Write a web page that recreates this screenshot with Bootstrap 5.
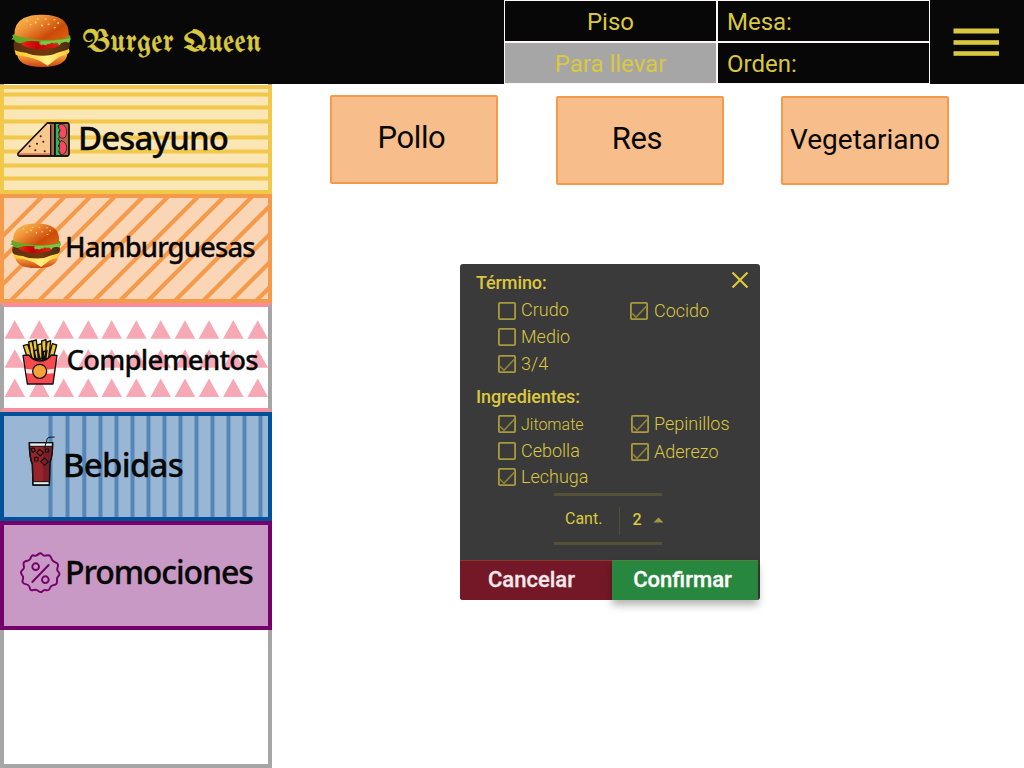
<!DOCTYPE html>
<html lang="es">
<head>
<meta charset="utf-8">
<meta name="viewport" content="width=device-width, initial-scale=1">
<title>Burger Queen</title>
<link href="https://cdn.jsdelivr.net/npm/bootstrap@5.3.0/dist/css/bootstrap.min.css" rel="stylesheet">
<style>
body{font-family:Roboto,sans-serif;width:1024px;height:768px;background:#fff;color:#080808;line-height:1}
svg{flex:none;display:block}
.topbar{height:84px;background:#080808;color:#dac83f}
.logo{margin:14px 0 0 11px}
.brand{font:400 30px/1 "Old English Text MT","UnifrakturMaguntia","UnifrakturCook","Liberation Serif",serif;margin:28px 0 0 12px;letter-spacing:.45px;-webkit-text-stroke:.5px #dac83f}
.order{width:426px;height:84px;margin-left:auto;display:grid;grid-template-columns:211px 211px;grid-template-rows:40px 40px;gap:2px;padding:1px;background:#fbf7f8;font-size:24px}
.order>div{background:#060706;padding-top:9px}
.order>.away{background:#a6a6a6}
.order>.info{padding-left:9px}
.burgerbtn{width:94px;padding:28px 0 0 23px}
.side{width:272px;height:684px;border:solid #a6a6a6;border-width:0 4px 4px;padding-top:1px}
.item{height:109px;width:272px;margin-left:-4px;border:4px solid;font-family:"Noto Sans",sans-serif;font-weight:500}
.item .pat{position:absolute;left:0;top:0}
.item .ico,.item span{position:relative}
.item span{-webkit-text-stroke:.3px}
.des{border-color:#f2c84b;background:#fae7b5}
.ham{border-color:#f59a4a;background:#fad5b6}
.com{border-color:#f68e9e #a6a6a6;background:#fff}
.beb{border-color:#00509a;background:#9ab6d5}
.pro{border-color:#75006b;background:#c799c4}
.des span{font-size:33px;margin:32px 0 0 8px;letter-spacing:-.85px}
.ham span{font-size:27.5px;margin:35px 0 0 4px;letter-spacing:-.9px}
.com span{font-size:27.5px;margin:39px 0 0 9px;letter-spacing:-.75px}
.beb span{font-size:33px;margin:32px 0 0 6px;letter-spacing:-.75px}
.pro span{font-size:32px;margin:31px 0 0 4px;letter-spacing:-1.1px}
.kinds{padding:11px 0 0 58px;gap:57.5px}
.kind{width:168px;height:89px;background:#f7bd8a;border:2px solid #f59a4a;border-radius:2px;font-size:31px;padding-top:25px}
.k1,.k2{letter-spacing:-.4px}
.dialog-box{width:300px;height:336px;margin:79px 0 0 188px;background:#3a3a3a;color:#dac83f;border-radius:3px;font-size:18px;font-weight:300}
.dialog-box h2{font-size:18px;font-weight:500;line-height:20px;margin:0 0 0 16px;letter-spacing:-.1px}
.opts{padding-left:38px;width:170px}
.opts.right{padding-left:0;width:120px}
.opt{height:26.5px;gap:5px}
.opt svg{width:18px;height:18px}
.qty{width:108px;height:52px;margin:0 0 0 94px;border:solid #555138;border-width:3px 0;font-size:16px;font-weight:400}
.qty .rule{flex:none;width:1px;height:28px;background:#504f3f;margin:11px 12px 0 17px}
.act{font-size:22px;font-weight:500;border:0;border-radius:0;line-height:1;padding:0 0 1px;height:40px;-webkit-text-stroke:.3px}
.cancel{width:152px;background:#741828;color:#f5e8ea;border-top:1px solid #8a3a2b;border-bottom-left-radius:3px;padding-right:9px}
.confirm{width:146px;background:#28873e;color:#fff;box-shadow:0 5px 8px rgba(0,0,0,.3);border-top:1px solid #4d8537;padding-right:5px}
</style>
</head>
<body class="d-flex flex-column overflow-hidden">
<svg width="0" height="0" class="position-absolute">
<defs>
<linearGradient id="bun" x1="0" y1=".1" x2="1" y2=".8"><stop offset="0" stop-color="#ffc150"/><stop offset=".35" stop-color="#ee9238"/><stop offset=".75" stop-color="#cc4a08"/><stop offset="1" stop-color="#d85d12"/></linearGradient>
<linearGradient id="bot" x1="0" y1="0" x2="0" y2="1"><stop offset="0" stop-color="#ffb349"/><stop offset="1" stop-color="#cc4310"/></linearGradient>
<linearGradient id="tom"><stop offset="0" stop-color="#ee2515"/><stop offset=".4" stop-color="#c50008"/><stop offset="1" stop-color="#e32316"/></linearGradient>
<linearGradient id="meat"><stop offset="0" stop-color="#5b3112"/><stop offset=".6" stop-color="#743a0d"/><stop offset="1" stop-color="#492b17"/></linearGradient>
<linearGradient id="chz"><stop offset="0" stop-color="#ffc51d"/><stop offset=".6" stop-color="#fff283"/><stop offset="1" stop-color="#ffc62a"/></linearGradient>
<symbol id="burger" viewBox="0 0 180 160">
<path d="M18 118Q17 160 94 160Q169 160 170 118Z" fill="url(#bot)"/>
<path d="M10 108L174 104Q178 112 174 118L164 124Q150 126 140 133L110 156L86 141Q66 132 44 128L14 124Z" fill="url(#chz)"/>
<path d="M9 84Q3 105 14 111Q28 116 45 117Q62 126 95 126Q123 126 139 117L170 108Q181 104 175 82Z" fill="url(#meat)"/>
<path d="M31 89Q35 81 60 81L140 82L148 92Q139 102 121 103Q98 110 72 106Q43 101 31 92Z" fill="url(#tom)"/>
<path d="M3 64L15 58L166 58L178 66L180 76L175 87L164 84L151 87L146 95L139 87L129 90L122 86L117 92L112 90L104 95L96 91L91 95L84 89L86 83Q52 79 38 85L26 89L12 84L9 78L0 77L6 71Z" fill="#65a822"/>
<path d="M90 82Q140 81 177 73L175 86L164 84L151 87L146 94L138 86L122 86L112 90L103 93L88 91Z" fill="#7fc547"/>
<path d="M10 64Q8 28 38 12Q61 1 94 2Q133 2 155 17Q175 31 174 65Q172 75 140 77Q75 84 10 64Z" fill="url(#bun)"/>
<g fill="#ffd775"><ellipse cx="80" cy="15" rx="3.500" ry="2"/><ellipse cx="104" cy="15" rx="3.500" ry="2"/><ellipse cx="131" cy="17" rx="3.500" ry="2"/><ellipse cx="48" cy="21" rx="3" ry="2"/><ellipse cx="74" cy="26" rx="3" ry="3"/><ellipse cx="59" cy="32" rx="3" ry="2"/><ellipse cx="93" cy="35" rx="3" ry="3"/><ellipse cx="113" cy="31" rx="3.500" ry="2"/><ellipse cx="142" cy="27" rx="3" ry="3"/><ellipse cx="132" cy="41" rx="4" ry="2"/></g>
</symbol>
<symbol id="box" viewBox="0 0 18 18"><rect x=".9" y=".9" width="16.200" height="16.200" rx="1" fill="none" stroke="#a99b3c" stroke-width="1.800"/></symbol>
<symbol id="boxon" viewBox="0 0 18 18"><rect x=".9" y=".9" width="16.200" height="16.200" rx="1" fill="none" stroke="#a99b3c" stroke-width="1.800"/><path d="M2 11.200L6 15.300L16.600 4" fill="none" stroke="#8c823b" stroke-width="1.600"/></symbol>
</defs>
</svg>

<header class="topbar d-flex align-items-start">
<svg class="logo" width="60" height="53"><use href="#burger"/></svg>
<div class="brand text-nowrap">Burger Queen</div>
<div class="order">
<div class="text-center">Piso</div><div class="info">Mesa:</div>
<div class="away text-center">Para llevar</div><div class="info">Orden:</div>
</div>
<div class="burgerbtn"><svg width="46" height="29" fill="#dac83f"><rect x=".5" y=".5" width="45.500" height="5"/><rect x=".5" y="12.200" width="45.500" height="4.600"/><rect x=".5" y="23.200" width="45.500" height="4.600"/></svg></div>
</header>

<div class="d-flex">
<nav class="side flex-shrink-0">
<div class="item des position-relative d-flex align-items-start">
<svg class="pat" width="265" height="101" fill="#f2c84b"><path d="M0 3.500h265v4H0zM0 16.500h265v4H0zM0 30.500h265v4H0zM0 46.500h265v4H0zM0 60.500h265v4H0zM0 74.500h265v4H0zM0 87.500h265v4H0z"/></svg>
<svg class="ico" width="53" height="35" viewBox="0 0 159 105" style="margin:33px 0 0 13px" stroke="#111" stroke-width="4" stroke-linejoin="round"><path d="M91 3H150Q156 3 156 10V95Q156 102 149 102H8Q0 100 4 93Z" fill="#ac6849"/><path d="M91 3L101 9V95H4Z" fill="#fcc78c" stroke="none"/><path d="M4 97H99" stroke="#e07b53" stroke-width="6"/><path d="M101 8V101M113 4V101" /><path d="M115 4H129L123 14L131 21L125 32L131 41L123 50L130 61L124 72L131 81L125 90L134 101H115Z" fill="#20bd5e" stroke-width="3"/><path d="M129 7Q122 11 126 20L130 24Q120 42 133 48Q150 52 149 27Q148 9 133 7ZM132 56Q124 66 128 72Q122 88 132 98Q150 96 149 76Q147 58 132 56Z" fill="#f54861" stroke-width="2"/><path d="M4 93L91 3H150Q156 3 156 10V95Q156 102 149 102H8Q0 100 4 93Z" fill="none"/><g fill="#222" stroke="none"><circle cx="71" cy="43" r="3"/><circle cx="60" cy="65" r="3"/><circle cx="79" cy="59" r="3"/><circle cx="38" cy="73" r="3"/><circle cx="55" cy="85" r="3"/><circle cx="83" cy="88" r="3"/></g></svg>
<span>Desayuno</span></div>
<div class="item ham position-relative d-flex align-items-start">
<svg class="pat" width="264" height="101" stroke="#f59a4a" stroke-width="4.200"><path d="M38.700 -2l-105 105M61.300 -2l-105 105M87 -2l-105 105M111.300 -2l-105 105M139.700 -2l-105 105M164.700 -2l-105 105M194.700 -2l-105 105M220.700 -2l-105 105M248.700 -2l-105 105M275.700 -2l-105 105M304 -2l-105 105M332 -2l-105 105M357 -2l-105 105"/></svg>
<svg class="ico" width="51" height="45" style="margin:25px 0 0 6px"><use href="#burger"/></svg>
<span>Hamburguesas</span></div>
<div class="item com position-relative d-flex align-items-start">
<svg class="pat" width="264" height="101" fill="#f7a8b5"><defs><path id="tris" d="M.5 18.500l10.300-18.500l10.300 18.500zM25 18.500l10.300-18.500l10.300 18.500zM49.400 18.500l10.300-18.500l10.300 18.500zM74 18.500l10.300-18.500l10.300 18.500zM97.400 18.500l10.300-18.500l10.300 18.500zM122 18.500l10.300-18.500l10.300 18.500zM146.400 18.500l10.300-18.500l10.300 18.500zM170.700 18.500l10.300-18.500l10.300 18.500zM194.700 18.500l10.300-18.500l10.300 18.500zM219 18.500l10.300-18.500l10.300 18.500zM243.400 18.500l10.300-18.500l10.300 18.500z"/></defs><use href="#tris" y="13.300"/><use href="#tris" y="42.300"/><use href="#tris" y="71.500"/></svg>
<svg class="ico" width="36" height="46" viewBox="0 0 108 138" style="margin:31.500px 0 0 17.500px" stroke="#101010" stroke-width="4" stroke-linejoin="round"><g fill="#f2c535"><path d="M4 20L17 16L30 56H16ZM20 9L30 6L42 60L28 58ZM32 6L43 3L49 58H38ZM47 18L58 14L66 58H52ZM59 6L72 2V58H60ZM75 9L86 5L80 58H68ZM91 14L104 18L94 56H80ZM37 36L47 31L55 62H42ZM65 38L75 34L71 62H60Z"/></g><path d="M3 49L20 48Q35 66 53 66Q75 66 88 48L105 49L93 135H16Z" fill="#f9484f"/><path d="M11 89L34 92V104L13 103ZM72 92L96 89L95 103L74 104Z" fill="#eee9df" stroke="none"/><circle cx="53" cy="97" r="21" fill="#f5a13c"/></svg>
<span>Complementos</span></div>
<div class="item beb position-relative d-flex align-items-start">
<svg class="pat" width="264" height="101" fill="#5588b8"><path d="M44.500 0h4v101h-4zM61.500 0h4v101h-4zM78.300 0h4v101h-4zM94.500 0h4v101h-4zM110.500 0h4v101h-4zM126.500 0h4v101h-4zM142.500 0h4v101h-4zM158.500 0h4v101h-4zM174.500 0h4v101h-4zM190.500 0h4v101h-4zM206.500 0h4v101h-4zM222.500 0h4v101h-4zM238.500 0h4v101h-4zM254.500 0h4v101h-4z"/></svg>
<svg class="ico" width="29" height="50" viewBox="0 0 87 150" style="margin:20px 0 0 24px" stroke="#101214" stroke-width="4" stroke-linejoin="round" fill="none"><path d="M4 20H74Q74 58 66 78L64 147H15L13 85Q4 64 4 20Z" fill="#982329"/><path d="M45 33H73Q72 62 65 78L63 135H45Z" fill="#7d1d27" stroke="none"/><path d="M5 20H73V31H5ZM14 137H64V147H15Z" fill="#e4f0ea" stroke-width="3"/><path d="M50 35L58 7L63 4L80 3" stroke-width="3"/><path d="M9 38L18 36L22 45L13 49ZM35 40L46 50L37 60L26 50ZM52 39H62V48H52ZM20 64H30V75H20ZM49 66L61 77L50 88L38 77Z" stroke-width="3.500"/><path d="M4 20H74Q74 58 66 78L64 147H15L13 85Q4 64 4 20Z"/></svg>
<span>Bebidas</span></div>
<div class="item pro position-relative d-flex align-items-start">
<svg class="ico" width="41" height="42" viewBox="0 0 123 126" style="margin:27px 0 0 16px" fill="none" stroke="#75006b" stroke-width="5.800" stroke-linejoin="round"><path d="M61 4C66 4 68 12 75 11C83 10 88 8 91 13C95 17 94 23 99 27C104 32 113 32 114 38C115 44 110 49 112 55C114 60 120 62 118 68C115 74 111 74 111 81C111 90 113 93 107 97C102 100 96 99 92 104C89 111 88 116 81 115C73 112 70 114 66 119C61 123 57 118 52 115C45 110 37 117 32 114C28 109 31 103 24 99C18 95 10 98 8 91C6 84 11 81 9 74C7 68 2 66 3 60C5 54 12 53 12 46C12 38 7 33 14 29C19 26 26 28 30 22C33 15 34 9 41 10C48 13 52 10 56 6C58 4 59 4 61 4Z"/><circle cx="47" cy="44" r="10"/><circle cx="76" cy="83" r="10"/><path d="M86 39L37 90" stroke-linecap="round"/></svg>
<span>Promociones</span></div>
</nav>

<main class="flex-grow-1">
<div class="kinds d-flex">
<div class="kind text-center" style="padding-right:5px"><span class="k1">Pollo</span></div>
<div class="kind text-center" style="margin-top:1px;padding-right:5px"><span class="k2">Res</span></div>
<div class="kind text-center" style="margin-top:1px;font-size:28px;padding-top:28px"><span>Vegetariano</span></div>
</div>
<section class="dialog-box">
<div class="d-flex justify-content-between" style="padding-top:9px;height:33px"><h2>Término:</h2>
<svg width="18" height="18" style="margin-right:11.500px;margin-top:-2px" stroke="#dac83f" stroke-width="2.200"><path d="M1.500 1.500l15 15M16.500 1.500l-15 15"/></svg></div>
<div class="d-flex" style="height:90px">
<div class="opts"><div class="opt d-flex align-items-center"><svg style="margin-top:1px"><use href="#box"/></svg>Crudo</div><div class="opt d-flex align-items-center"><svg><use href="#box"/></svg>Medio</div><div class="opt d-flex align-items-center" style="padding-top:1px"><svg><use href="#boxon"/></svg>3/4</div></div>
<div class="opts right"><div class="opt d-flex align-items-center" style="padding-top:1px"><svg><use href="#boxon"/></svg><span style="padding-left:1px">Cocido</span></div></div>
</div>
<h2>Ingredientes:</h2>
<div class="d-flex" style="padding-top:4px;height:86px">
<div class="opts"><div class="opt d-flex align-items-center"><svg><use href="#boxon"/></svg><span style="font-size:16px;padding-top:1px">Jitomate</span></div><div class="opt d-flex align-items-center"><svg><use href="#box"/></svg>Cebolla</div><div class="opt d-flex align-items-center"><svg><use href="#boxon"/></svg>Lechuga</div></div>
<div class="opts right" style="padding:0 0 0 1px"><div class="opt d-flex align-items-center"><svg><use href="#boxon"/></svg>Pepinillos</div><div class="opt d-flex align-items-center" style="padding-top:2px"><svg><use href="#boxon"/></svg>Aderezo</div></div>
</div>
<div class="qty d-flex align-items-start"><span style="margin:15px 0 0 11px">Cant.</span><div class="rule"></div><span class="fw-medium" style="margin:16px 0 0">2</span><svg width="11" height="6" style="margin:21px 0 0 11px" fill="#a4983f"><path d="M.5 5.500L5.500 .5L10.500 5.500z"/></svg></div>
<div class="d-flex" style="margin-top:15px"><button class="act cancel">Cancelar</button><button class="act confirm">Confirmar</button></div>
</section>
</main>
</div>
<script src="https://cdn.jsdelivr.net/npm/bootstrap@5.3.0/dist/js/bootstrap.bundle.min.js"></script>
</body>
</html>
